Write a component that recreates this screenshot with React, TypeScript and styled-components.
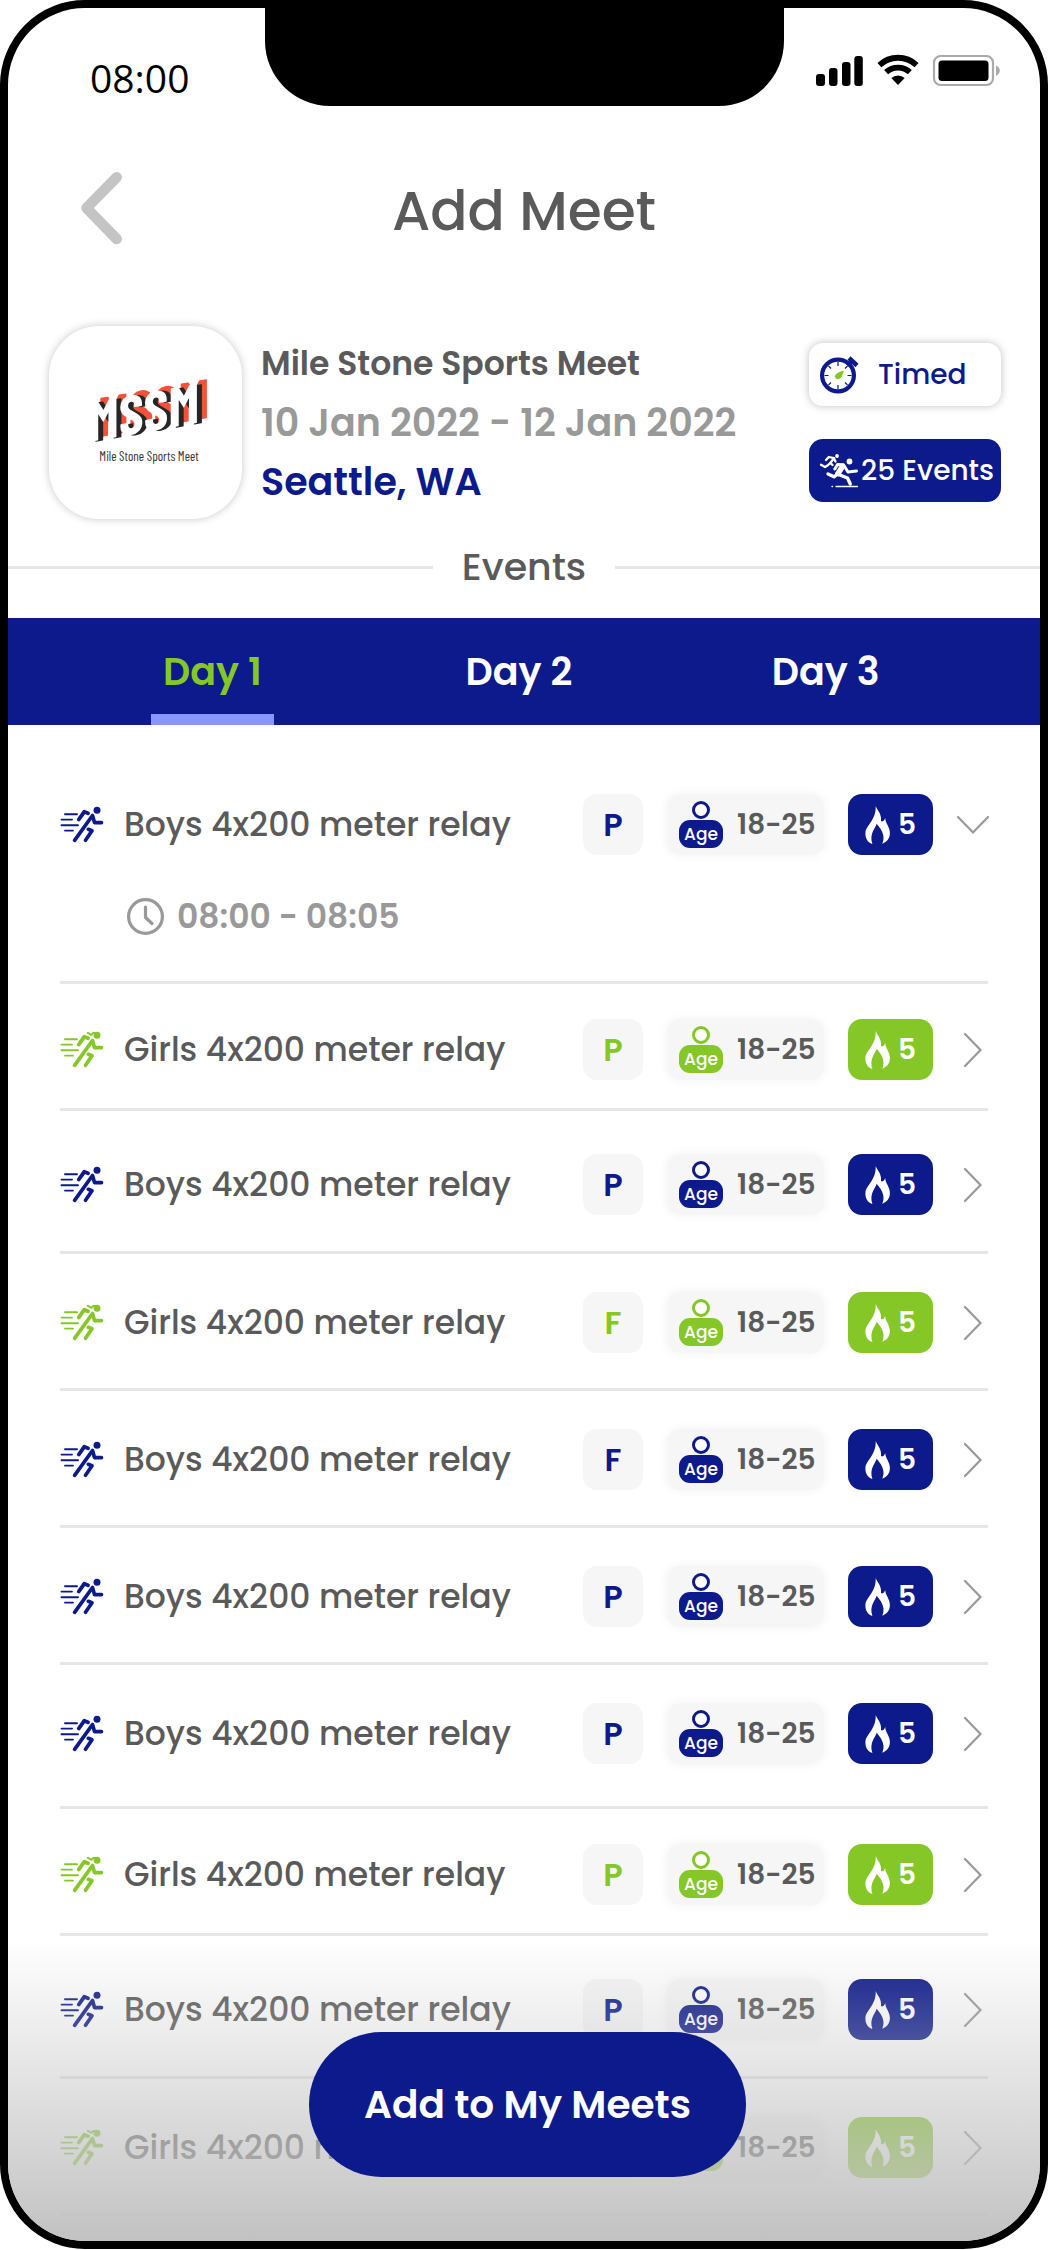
import React, { useState } from "react";
import styled, { createGlobalStyle } from "styled-components";

const navy = "#0d1a8b";
const green = "#85c727";
const ink = "#5a5a5a";
const muted = "#999999";
const hairline = "#e6e6e6";

const GlobalStyle = createGlobalStyle`
  *, *::before, *::after { box-sizing: border-box; }
  body {
    margin: 0;
    background: #ffffff;
    font-family: Poppins, Inter, "Liberation Sans", sans-serif;
    font-feature-settings: "cv11";
    color: ${ink};
  }
  button { font: inherit; font-feature-settings: inherit; border: 0; padding: 0; background: none; cursor: pointer; }
  h1, h2, p, ul { margin: 0; padding: 0; font-weight: inherit; }
  svg { display: block; flex: none; overflow: visible; }
`;

const Phone = styled.div`
  position: relative;
  border: 8px solid #000000;
  border-radius: 85px;
  background: #ffffff;
  overflow: hidden;
`;

const StatusBar = styled.div`
  display: grid;
  grid-template-columns: 1fr minmax(0, 519px) 1fr;
  height: 96px;
`;

const Clock = styled.time`
  padding: 42px 0 0 82px;
  font: 400 39px/56px "Open Sans", sans-serif;
  color: #000000;
`;

const Notch = styled.div`
  background: #000000;
  border-radius: 0 0 65px 65px;
`;

const StatusIcons = styled.div`
  display: flex;
  justify-content: flex-end;
  gap: 14px;
  padding: 47px 40px 0 0;
`;

const Header = styled.header`
  display: grid;
  grid-template-columns: 1fr auto 1fr;
  align-items: start;
  padding: 68px 73px 76px;
`;

const BackButton = styled.button`
  justify-self: start;
`;

const Title = styled.h1`
  font-size: 55px;
  line-height: 78px;
  font-weight: 500;
`;

const MeetCard = styled.section`
  display: flex;
  align-items: center;
  gap: 19px;
  padding: 0 39px 0 41px;
`;

const LogoTile = styled.div`
  flex: none;
  width: 193px;
  height: 193px;
  border-radius: 50px;
  background: #ffffff;
  box-shadow: 0 0 9px rgba(0, 0, 0, 0.22);
`;

const MeetInfo = styled.div`
  flex: 1;
  white-space: nowrap;
  line-height: 59px;
  font-weight: 600;
`;

const MeetName = styled.h2`
  font-size: 33px;
  font-weight: 600;
`;

const MeetDates = styled.p`
  font-size: 38px;
  color: ${muted};
`;

const MeetPlace = styled.p`
  font-size: 38px;
  color: ${navy};
`;

const Badges = styled.div`
  display: flex;
  flex-direction: column;
  gap: 33px;
`;

const Badge = styled.div<{ $filled?: boolean }>`
  display: flex;
  align-items: center;
  gap: ${(p) => (p.$filled ? 3 : 19)}px;
  width: 192px;
  height: 63px;
  padding-left: 11px;
  border-radius: 14px;
  font-size: 28px;
  font-weight: 500;
  white-space: nowrap;
  color: ${(p) => (p.$filled ? "#ffffff" : navy)};
  background: ${(p) => (p.$filled ? navy : "#ffffff")};
  box-shadow: ${(p) => (p.$filled ? "none" : "0 0 9px rgba(0, 0, 0, 0.25)")};
`;

const SectionTitle = styled.h2`
  display: flex;
  align-items: center;
  gap: 29px;
  padding: 24px 0 27px;
  font-size: 38px;
  line-height: 48px;
  font-weight: 500;

  &::before, &::after {
    content: "";
    flex: 1;
    height: 3px;
    background: ${hairline};
  }
`;

const Tabs = styled.div`
  display: grid;
  grid-template-columns: repeat(3, 1fr);
  justify-items: center;
  padding: 0 61px 0 51px;
  background: ${navy};
`;

const Tab = styled.button<{ $active: boolean }>`
  width: 123px;
  height: 107px;
  padding-top: 10px;
  border-bottom: 11px solid ${(p) => (p.$active ? "#8896ff" : "transparent")};
  font-size: 38px;
  font-weight: 600;
  white-space: nowrap;
  color: ${(p) => (p.$active ? green : "#ffffff")};
`;

type Spacing = "open" | "tight" | "loose" | "even" | "deep";

const rowPadding: Record<Spacing, string> = {
  open: "69px 0 46px",
  tight: "35px 0 28px",
  loose: "43px 0 36px",
  even: "38px 0 35px",
  deep: "38px 0 42px",
};

const EventList = styled.ul`
  list-style: none;
  padding: 0 52px 25px;
`;

const EventItem = styled.li<{ $spacing: Spacing }>`
  padding: ${(p) => rowPadding[p.$spacing]};
  border-bottom: 3px solid ${hairline};
`;

const EventRow = styled.div`
  display: grid;
  grid-template-columns: 44px 1fr auto;
  align-items: center;
  gap: 20px;
`;

const EventName = styled.span`
  font-size: 33px;
  font-weight: 500;
  white-space: nowrap;
`;

const Tags = styled.div`
  display: flex;
  align-items: center;
  gap: 24px;
`;

const Round = styled.span<{ $tone: string }>`
  width: 60px;
  border-radius: 14px;
  background: #f6f6f6;
  text-align: center;
  font-size: 32px;
  line-height: 61px;
  font-weight: 600;
  color: ${(p) => p.$tone};
`;

const AgeRange = styled.span`
  display: flex;
  align-items: center;
  gap: 14px;
  width: 157px;
  height: 61px;
  padding-left: 12px;
  border-radius: 14px;
  background: #f6f6f6;
  box-shadow: 0 0 8px 2px #f6f6f6;
  font-size: 28px;
  font-weight: 600;
`;

const Person = styled.span<{ $tone: string }>`
  display: flex;
  flex-direction: column;
  align-items: center;
  gap: 1px;
  color: ${(p) => p.$tone};

  &::before {
    content: "";
    width: 18px;
    height: 18px;
    border: 3px solid currentColor;
    border-radius: 50%;
    background: #ffffff;
  }
`;

const PersonBody = styled.span<{ $tone: string }>`
  width: 44px;
  border-radius: 11px;
  background: ${(p) => p.$tone};
  color: #ffffff;
  text-align: center;
  font-size: 17px;
  line-height: 28px;
  font-weight: 500;
`;

const Heat = styled.span<{ $tone: string }>`
  display: flex;
  align-items: center;
  justify-content: center;
  gap: 8px;
  width: 85px;
  height: 61px;
  border-radius: 14px;
  background: ${(p) => p.$tone};
  color: #ffffff;
  font-size: 28px;
  font-weight: 600;
`;

const Toggle = styled.button`
  display: grid;
  place-items: center;
  width: 31px;
  height: 32px;
`;

const Schedule = styled.p`
  display: flex;
  align-items: center;
  gap: 13px;
  padding: 43px 0 0 67px;
  font-size: 33px;
  line-height: 37px;
  font-weight: 600;
  color: ${muted};
`;

const Footer = styled.div`
  position: absolute;
  left: 0;
  right: 0;
  bottom: 0;
  height: 302px;
  display: flex;
  justify-content: center;
  align-items: flex-end;
  padding: 0 53px 64px 60px;
  background: linear-gradient(rgba(194, 194, 194, 0), rgb(194, 194, 194));
  pointer-events: none;
`;

const AddButton = styled.button`
  padding: 0 55px;
  height: 145px;
  border-radius: 73px;
  background: ${navy};
  color: #ffffff;
  font-size: 39px;
  font-weight: 600;
  white-space: nowrap;
  pointer-events: auto;
`;

const SignalIcon = () => (
  <svg width="47" height="31" viewBox="0 0 47 31" aria-hidden="true">
    <rect x="0" y="19" width="9" height="12" rx="3" />
    <rect x="13" y="13" width="8.5" height="18" rx="3" />
    <rect x="26" y="7" width="8.5" height="24" rx="3" />
    <rect x="38.3" y="1" width="8.5" height="30" rx="3" />
  </svg>
);

const WifiIcon = () => (
  <svg width="42" height="31" viewBox="0 0 42 31" aria-hidden="true">
    <g fill="none" stroke="#000" strokeWidth="5.8">
      <path d="M2.4 10.1A27.2 27.2 0 0 1 39.6 10.1" />
      <path d="M9.1 17.2A17.5 17.5 0 0 1 32.9 17.2" />
    </g>
    <path d="M21 30 14.3 23.1A9.6 9.6 0 0 1 27.7 23.1Z" />
  </svg>
);

const BatteryIcon = () => (
  <svg width="67" height="31" viewBox="0 0 67 31" aria-hidden="true">
    <rect x="1" y="1" width="59" height="29" rx="6.5" fill="none" stroke="#aaa" strokeWidth="2.2" />
    <rect x="5.5" y="5.5" width="50" height="20.5" rx="3.5" />
    <path d="M63 10.5Q66.8 12.5 66.8 15.5T63 21Z" fill="#aaa" />
  </svg>
);

const BackIcon = () => (
  <svg width="42" height="72" viewBox="0 0 42 72" aria-hidden="true">
    <path d="M35.7 5.3 5.5 36 35.7 67" fill="none" stroke="#c4c4c4" strokeWidth="10.5" strokeLinecap="round" strokeLinejoin="round" />
  </svg>
);

const MeetLogo = () => (
  <svg width="193" height="193" viewBox="0 0 193 193" role="img" aria-label="MSSM">
    <g
      transform="translate(40 116) skewY(-10)"
      fontFamily='"Barlow Condensed", "Bebas Neue", Oswald, "DejaVu Sans Condensed", sans-serif'
      fontWeight="700"
      fontSize="56"
      aria-hidden="true"
    >
      <text x="9" y="-3" fill="#f4513a">MSSM</text>
      <text x="4" y="1" fill="#262626">MSSM</text>
      <text x="-1" y="0" fill="#ffffff">MSSM</text>
    </g>
    <text
      x="100"
      y="135"
      textAnchor="middle"
      fontFamily='"Barlow Condensed", "Roboto Condensed", Roboto, sans-serif'
      fontSize="13"
      fontWeight="400"
      fill="#333"
    >
      Mile Stone Sports Meet
    </text>
  </svg>
);

const StopwatchIcon = () => (
  <svg width="39" height="39" viewBox="0 0 39 39" aria-hidden="true">
    <circle cx="18" cy="20.5" r="15.9" fill="none" stroke={navy} strokeWidth="4.2" />
    <g stroke={navy} strokeWidth="1.2">
      <path d="M18 7v4M18 30v4M4.5 20.5h4M27.5 20.5h4M8.5 11l2.5 2.5M25 27.5l2.5 2.5M8.5 30l2.5-2.5M25 13.5l2.5-2.5" />
    </g>
    <path d="M23.8 15.5Q22.5 22.5 19 24 15.5 24.7 14.8 21.5 15 17.8 23.8 15.5Z" fill={green} />
    <path d="M29 3 37 10.5" stroke={navy} strokeWidth="4.5" />
    <path d="M27.5 10.5 32 6" stroke={navy} strokeWidth="4" />
  </svg>
);

const RaceIcon = () => (
  <svg width="38" height="34" viewBox="0 0 38 34" fill="none" stroke="#fff" strokeLinecap="round" strokeLinejoin="round" aria-hidden="true">
    <g strokeWidth="2.3">
      <path d="M6 6 8.8 3 14 4.2 10.5 8.8 7.5 11.5 5 13 1 10.8" />
      <path d="M14 4.5 15.5 7.5" />
      <path d="M10.5 9 12.5 11" />
    </g>
    <circle cx="17" cy="2" r="1.9" fill="#fff" stroke="none" />
    <circle cx="29.5" cy="7.5" r="2.9" fill="#fff" stroke="none" />
    <path d="M22.5 12.5 18 19.5" strokeWidth="5.5" />
    <path d="M14.8 15 17.5 10.5 23.5 10.8 28 18 36.5 17" strokeWidth="3" />
    <path d="M17.5 20 14 22.8 8 20M18.5 20.5 27.5 24 30.3 30" strokeWidth="3.4" />
    <path d="M12 32.5h.5M16 32.5H37.5" strokeWidth="1.3" />
  </svg>
);

const RunnerIcon = ({ tone, ponytail }: { tone: string; ponytail: boolean }) => (
  <svg width="44" height="35" viewBox="0 0 44 35" fill="none" stroke={tone} strokeLinecap="round" strokeLinejoin="round" aria-hidden="true">
    <g strokeWidth="1.9">
      <path d="M5 7.3H17M1.5 12.6H12M1.5 18.2H18M5 23.6H13" />
    </g>
    <path d="M18.8 12.5 24.2 4.8 28 6.3" strokeWidth="3.9" />
    <path d="M14.6 33.3 32.5 8.5 34.5 15.6H41.5" strokeWidth="3.7" />
    <path d="M28.3 22.3 32 23.8 25.5 33.3" strokeWidth="3.7" />
    <circle cx="37" cy="3.3" r="3.5" fill={tone} stroke="none" />
    {ponytail && <path d="M27.8 .8 31.5 2.8 33 1 36 1" strokeWidth="1.9" />}
  </svg>
);

const FlameIcon = () => (
  <svg width="25" height="38" viewBox="0 0 75 115" fill="#fff" aria-hidden="true">
    <path d="M32 0C36 12 51 24 48 46 54 48 59 43 61 36 61 52 75 62 75 82 75 98 66 110 52 114 60 96 56 78 35 54 30 70 12 84 22 115 6 109 0 96 1 80 3 58 34 42 32 0Z" />
  </svg>
);

const ChevronIcon = ({ open }: { open: boolean }) =>
  open ? (
    <svg width="32" height="17" viewBox="0 0 32 17" aria-hidden="true">
      <path d="M1 1 16 16.5 31 1" fill="none" stroke="#999" strokeWidth="2.2" strokeLinecap="round" />
    </svg>
  ) : (
    <svg width="17" height="32" viewBox="0 0 17 32" aria-hidden="true">
      <path d="M1 0 16.5 16 1 32" fill="none" stroke="#999" strokeWidth="2.2" strokeLinecap="round" />
    </svg>
  );

const ClockIcon = () => (
  <svg width="37" height="37" viewBox="0 0 37 37" fill="none" stroke={muted} strokeLinecap="round" strokeLinejoin="round" aria-hidden="true">
    <circle cx="18.5" cy="18.5" r="16.9" strokeWidth="3.2" />
    <path d="M18.5 9V19.5L25 25.5" strokeWidth="3.2" />
  </svg>
);

interface MeetEvent {
  team: "Boys" | "Girls";
  round: "P" | "F";
  spacing: Spacing;
}

const events: MeetEvent[] = [
  { team: "Boys", round: "P", spacing: "open" },
  { team: "Girls", round: "P", spacing: "tight" },
  { team: "Boys", round: "P", spacing: "loose" },
  { team: "Girls", round: "F", spacing: "even" },
  { team: "Boys", round: "F", spacing: "even" },
  { team: "Boys", round: "P", spacing: "even" },
  { team: "Boys", round: "P", spacing: "deep" },
  { team: "Girls", round: "P", spacing: "tight" },
  { team: "Boys", round: "P", spacing: "loose" },
  { team: "Girls", round: "P", spacing: "even" },
];

export default function App() {
  const [day, setDay] = useState(1);
  const [openRow, setOpenRow] = useState(0);

  return (
    <>
      <GlobalStyle />
      <Phone>
        <StatusBar>
          <Clock>08:00</Clock>
          <Notch />
          <StatusIcons>
            <SignalIcon />
            <WifiIcon />
            <BatteryIcon />
          </StatusIcons>
        </StatusBar>

        <Header>
          <BackButton aria-label="Back">
            <BackIcon />
          </BackButton>
          <Title>Add Meet</Title>
        </Header>

        <MeetCard>
          <LogoTile>
            <MeetLogo />
          </LogoTile>
          <MeetInfo>
            <MeetName>Mile Stone Sports Meet</MeetName>
            <MeetDates>10 Jan 2022 - 12 Jan 2022</MeetDates>
            <MeetPlace>Seattle, WA</MeetPlace>
          </MeetInfo>
          <Badges>
            <Badge>
              <StopwatchIcon />
              Timed
            </Badge>
            <Badge $filled>
              <RaceIcon />
              25 Events
            </Badge>
          </Badges>
        </MeetCard>

        <SectionTitle>Events</SectionTitle>

        <Tabs role="tablist">
          {[1, 2, 3].map((n) => (
            <Tab key={n} role="tab" aria-selected={day === n} $active={day === n} onClick={() => setDay(n)}>
              Day {n}
            </Tab>
          ))}
        </Tabs>

        <EventList>
          {events.map((event, i) => {
            const tone = event.team === "Boys" ? navy : green;
            const open = openRow === i;
            return (
              <EventItem key={i} $spacing={event.spacing}>
                <EventRow>
                  <RunnerIcon tone={tone} ponytail={event.team === "Girls"} />
                  <EventName>{event.team} 4x200 meter relay</EventName>
                  <Tags>
                    <Round $tone={tone}>{event.round}</Round>
                    <AgeRange>
                      <Person $tone={tone}>
                        <PersonBody $tone={tone}>Age</PersonBody>
                      </Person>
                      18-25
                    </AgeRange>
                    <Heat $tone={tone}>
                      <FlameIcon />5
                    </Heat>
                    <Toggle aria-label="Show times" aria-expanded={open} onClick={() => setOpenRow(open ? -1 : i)}>
                      <ChevronIcon open={open} />
                    </Toggle>
                  </Tags>
                </EventRow>
                {open && (
                  <Schedule>
                    <ClockIcon />
                    08:00 - 08:05
                  </Schedule>
                )}
              </EventItem>
            );
          })}
        </EventList>

        <Footer>
          <AddButton>Add to My Meets</AddButton>
        </Footer>
      </Phone>
    </>
  );
}
